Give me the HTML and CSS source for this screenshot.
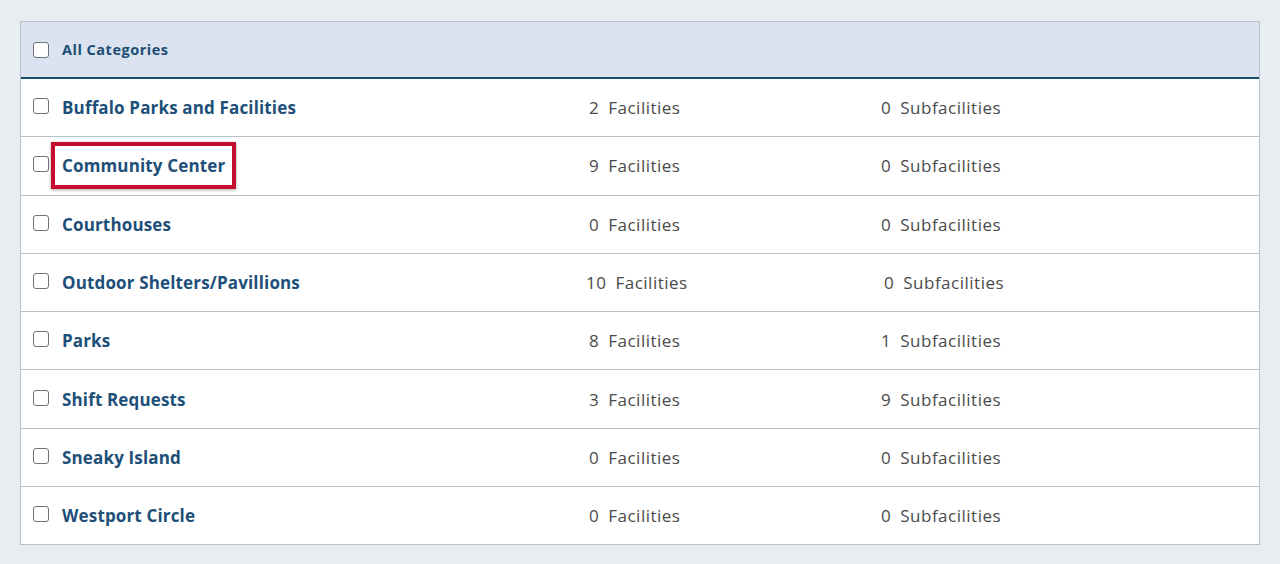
FILE: index.html
```html
<!DOCTYPE html>
<html lang="en">
<head>
<meta charset="utf-8">
<title>Categories</title>
<link rel="stylesheet" href="styles.css">
</head>
<body>
<div class="page">
  <div class="table">
    <div class="head">
      <span class="box"></span>
      <span class="head-label">All Categories</span>
    </div>
    <div class="row">
      <div class="name"><span class="box"></span><a class="link">Buffalo Parks and Facilities</a></div>
      <div class="count"><span>2</span>Facilities</div>
      <div class="sub"><span>0</span>Subfacilities</div>
    </div>
    <div class="row">
      <div class="name"><span class="box"></span><a class="link highlighted">Community Center</a></div>
      <div class="count"><span>9</span>Facilities</div>
      <div class="sub"><span>0</span>Subfacilities</div>
    </div>
    <div class="row">
      <div class="name"><span class="box"></span><a class="link">Courthouses</a></div>
      <div class="count"><span>0</span>Facilities</div>
      <div class="sub"><span>0</span>Subfacilities</div>
    </div>
    <div class="row wide">
      <div class="name"><span class="box"></span><a class="link">Outdoor Shelters/Pavillions</a></div>
      <div class="count"><span>10</span>Facilities</div>
      <div class="sub"><span>0</span>Subfacilities</div>
    </div>
    <div class="row">
      <div class="name"><span class="box"></span><a class="link">Parks</a></div>
      <div class="count"><span>8</span>Facilities</div>
      <div class="sub"><span>1</span>Subfacilities</div>
    </div>
    <div class="row">
      <div class="name"><span class="box"></span><a class="link">Shift Requests</a></div>
      <div class="count"><span>3</span>Facilities</div>
      <div class="sub"><span>9</span>Subfacilities</div>
    </div>
    <div class="row">
      <div class="name"><span class="box"></span><a class="link">Sneaky Island</a></div>
      <div class="count"><span>0</span>Facilities</div>
      <div class="sub"><span>0</span>Subfacilities</div>
    </div>
    <div class="row">
      <div class="name"><span class="box"></span><a class="link">Westport Circle</a></div>
      <div class="count"><span>0</span>Facilities</div>
      <div class="sub"><span>0</span>Subfacilities</div>
    </div>
  </div>
</div>
</body>
</html>
```
FILE: styles.css
```css
* { box-sizing: border-box; }
html, body { margin: 0; padding: 0; }
body {
  background: #e8edf2;
  font-family: "Open Sans", "Lato", sans-serif;
  width: 1280px;
  height: 564px;
  overflow: hidden;
}
.page {
  padding: 21px 20px 0 20px;
  width: 1280px;
}
.table {
  width: 1240px;
  border: 1px solid #b7c0cb;
  background: #ffffff;
}
.head {
  height: 57px;
  background: #dae3ef;
  border-bottom: 2px solid #1e4d74;
  display: flex;
  align-items: center;
  padding-left: 12px;
}
.head-label {
  font-size: 14.5px;
  font-weight: 700;
  color: #1e4d74;
  margin-left: 13px;
  letter-spacing: 0.5px;
}
.box {
  display: inline-block;
  width: 16px;
  height: 16px;
  border: 1px solid #6d7178;
  border-radius: 3px;
  background: #fff;
  flex: none;
}
.row {
  height: 58.3px;
  display: grid;
  grid-template-columns: 534px 292px 1fr;
  align-items: center;
  border-top: 1px solid #b7c0cb;
  font-size: 17px;
}
.head + .row { border-top: none; height: 57.3px; }
.name {
  display: flex;
  align-items: center;
  padding-left: 12px;
}
.name .box { margin-top: -3px; }
.link {
  position: relative;
  margin-left: 13px;
  font-weight: 700;
  color: #1d4f78;
  text-decoration: none;
  letter-spacing: 0.15px;
}
.highlighted::after {
  content: "";
  position: absolute;
  left: -11px;
  right: -11px;
  top: -12px;
  bottom: -12px;
  border: 4px solid #c4102e;
  box-shadow: 0 1px 3px rgba(0,0,0,0.35);
}
.count, .sub {
  color: #4a4a4a;
  letter-spacing: 0.5px;
}
.count span, .sub span { margin-right: 9px; }
.count { padding-left: 34px; }
.sub { padding-left: 34px; }
.wide .count { padding-left: 31px; }
.wide .sub { padding-left: 37px; }
```
